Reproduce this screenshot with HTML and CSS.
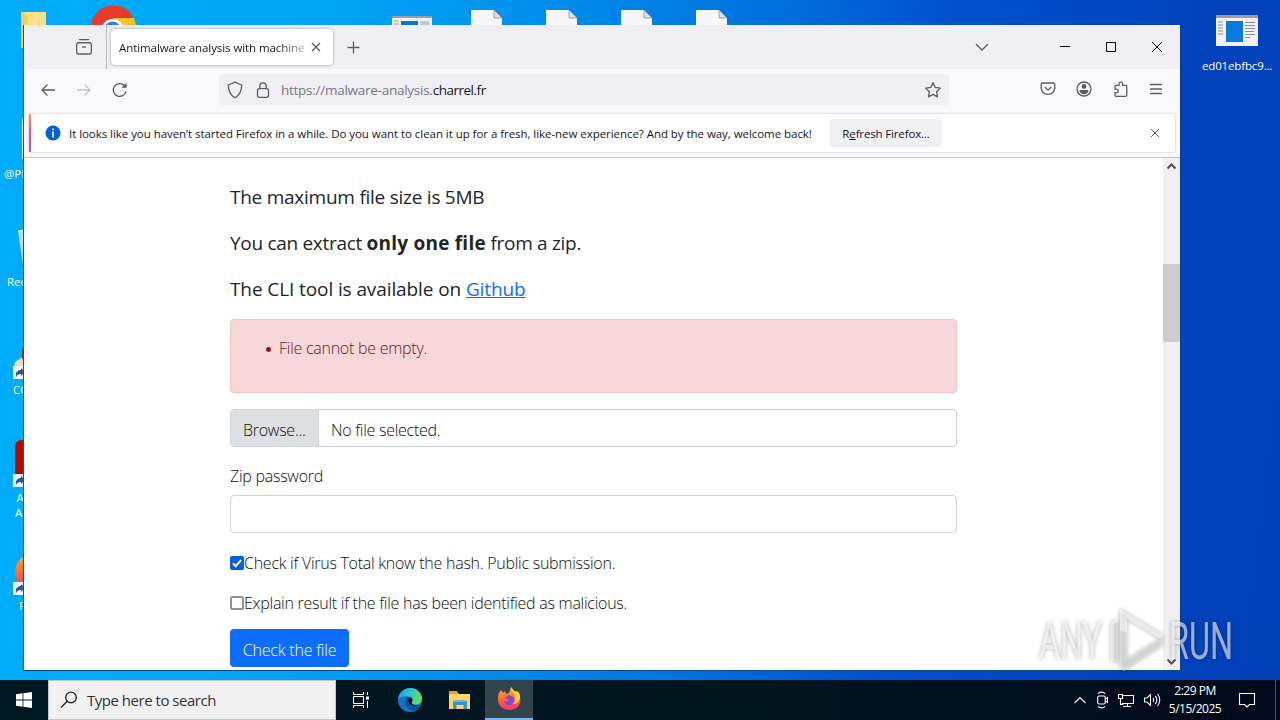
FILE: index.html
```html
<!DOCTYPE html>
<html lang="en">
  <head>
    <meta charset="UTF-8" />
    <meta name="viewport" content="width=device-width, initial-scale=1.0" />
    <title>Antimalware analysis with machine learning</title>
    <link rel="stylesheet" href="styles.css">
  </head>

  <body>
    <div class="desktop">
      <!-- Desktop icons -->
      <svg class="desktop-art" width="1280" height="680" viewBox="0 0 1280 680">
        <defs>
          <linearGradient id="fox" x1="0" y1="0" x2="0" y2="1">
            <stop offset="0" stop-color="#ffb52b" />
            <stop offset="0.5" stop-color="#ff6b35" />
            <stop offset="1" stop-color="#f0307a" />
          </linearGradient>
          <g id="page">
            <path d="M0 0h23l8 8v20H0z" fill="#f7f7fa" />
            <path d="M23 0v8h8z" fill="#dcdfe6" stroke="#8a929f" stroke-width="0.8" />
          </g>
          <g id="shortcut">
            <path d="M0 0h12v13H0z" fill="#f4f6fa" />
            <path d="M3 11c-1-5 2-7 5-7V2l4 4-4 4V8c-3 0-4 1-5 3z" fill="#2d5594" />
          </g>
        </defs>
        <path d="M21 12h25v14H21z" fill="#ffe08a" />
        <path d="M21 12h3l4 5v9l-4 22h-3z" fill="#f7cd5f" />
        <path d="M91 27a22 22 0 0 1 44 0z" fill="#e83b2a" />
        <path d="M113 18h21l2 8h-23z" fill="#fdc32c" />
        <circle cx="112.500" cy="30" r="11" fill="#fff" />
        <circle cx="112.500" cy="30" r="8.500" fill="#3c7de8" />
        <path d="M392 16h40v12h-40z" fill="#f1f1f1" />
        <path d="M392 16h40v2h-40z" fill="#999fa8" />
        <path d="M401 21h17v6h-17z" fill="#0a76d0" />
        <path d="M394 21h5M394 24h5M420 22h9M420 24h10" stroke="#9aa0a8" />
        <use href="#page" x="471" y="10" />
        <use href="#page" x="546" y="10" />
        <use href="#page" x="621" y="10" />
        <use href="#page" x="696" y="10" />
        <path d="M1216 15h42v31h-42z" fill="#f1f1f1" />
        <path d="M1216 15h42v3h-42z" fill="#9b9ca3" />
        <path d="M1244 16h3M1250 16h2M1254 16h2" stroke="#d58b60" />
        <path d="M1226 21h17v21h-17z" fill="#0a7ad8" />
        <path d="M1218 22h5M1218 25h5M1218 28h5M1218 31h5M1218 34h5M1245 22.500h10M1245 25.500h10M1245 28.500h10M1245 31.500h9M1245 34.500h10M1245 37.500h5" stroke="#8d8f97" />
        <path d="M22 119h4v40h-4z" fill="#e7f2fb" />
        <path d="M18 231l8-2v36h-3z" fill="#b9dcf1" />
        <path d="M18 231l6-1" stroke="#ecf7fd" />
        <path d="M15 362l9-6v12H14z" fill="#f3d9b8" />
        <path d="M22 350l3-4v12l-3 1z" fill="#b3202a" />
        <use href="#shortcut" x="13" y="366" />
        <rect x="15" y="440" width="30" height="38" rx="6" fill="#b30b00" />
        <use href="#shortcut" x="13" y="474" />
        <circle cx="34" cy="572" r="19" fill="url(#fox)" />
        <use href="#shortcut" x="13" y="582" />
      </svg>
      <span class="icon-label label-phones">@PH</span>
      <span class="icon-label label-recycle">Recy</span>
      <span class="icon-label label-cc">CC</span>
      <span class="icon-label label-adobe">Ad<br>Acr</span>
      <span class="icon-label label-firefox">Fir</span>
      <span class="icon-label label-file">ed01ebfbc9...</span>

      <!-- Browser window -->
      <div class="window">
        <div class="tab-bar">
          <div class="tab-view">
            <svg width="18" height="18" viewBox="0 0 18 18"><path d="M4 1.700h10M2.300 4.700h13.400" /><rect x="1.700" y="4.700" width="14.600" height="11.300" rx="2" /><path d="M7 9h4" /></svg>
          </div>
          <div class="tab">
            <span class="tab-title">Antimalware analysis with machine</span>
            <svg width="10" height="10" viewBox="0 0 10 10"><path d="M1 1l8 8M9 1l-8 8" /></svg>
          </div>
          <svg class="new-tab" width="13" height="13" viewBox="0 0 13 13"><path d="M6.500 .5v12M.5 6.500h12" /></svg>
          <div class="window-controls">
            <svg class="all-tabs" width="14" height="8" viewBox="0 0 14 8"><path d="M1 1l6 6 6-6" /></svg>
            <svg class="control" width="12" height="12" viewBox="0 0 12 12"><path d="M1 5.500h10" /></svg>
            <svg class="control" width="12" height="12" viewBox="0 0 12 12"><path d="M1.500 1.500h9v9h-9z" /></svg>
            <svg class="control" width="12" height="12" viewBox="0 0 12 12"><path d="M1 1l10 10M11 1L1 11" /></svg>
          </div>
        </div>

        <div class="nav-bar">
          <div class="nav-buttons">
            <svg width="16" height="16" viewBox="0 0 16 16"><path d="M15 8H2M7.500 2.500L2 8l5.500 5.500" /></svg>
            <svg class="disabled" width="16" height="16" viewBox="0 0 16 16"><path d="M1 8h13M8.500 2.500L14 8l-5.500 5.500" /></svg>
            <svg width="16" height="16" viewBox="0 0 16 16"><path d="M14 9.300A6.400 6.400 0 1 1 12.500 3.700L14 5.300" /><path d="M14.500 .8v5h-5z" class="solid" /></svg>
          </div>
          <div class="url-bar">
            <svg width="16" height="18" viewBox="0 0 16 18"><path d="M8 1.200L14.700 4c0 6-1.700 10-6.700 12.800C3 14 1.300 10 1.300 4z" stroke-linejoin="round" /></svg>
            <svg width="14" height="18" viewBox="0 0 14 18"><rect x="1.500" y="7.700" width="11" height="8.600" rx="2" /><path d="M3.800 7.700V5a3.200 3.200 0 0 1 6.400 0v2.700" /></svg>
            <span class="url">https://malware-analysis.<b>charrel.fr</b></span>
            <svg class="star" width="18" height="18" viewBox="0 0 18 18"><path d="M9 1.700l2.200 4.700 5.100.7-3.700 3.600.9 5.200L9 13.400l-4.500 2.500.9-5.200L1.700 7.100l5.100-.7z" stroke-linejoin="round" /></svg>
          </div>
          <div class="nav-tools">
            <svg width="16" height="16" viewBox="0 0 16 16"><path d="M2.700 2h10.600a1.500 1.500 0 0 1 1.500 1.500V7a6.800 6.300 0 0 1-13.600 0V3.500A1.500 1.500 0 0 1 2.700 2z" /><path d="M4.700 6L8 9.200 11.300 6" /></svg>
            <svg width="16" height="16" viewBox="0 0 16 16"><circle cx="8" cy="8" r="7" /><circle cx="8" cy="5.500" r="2.400" class="solid" /><path d="M3.500 9h9c0 2.600-2 4.200-4.500 4.200S3.500 11.600 3.500 9z" class="solid" /></svg>
            <svg width="16" height="16" viewBox="0 0 16 16"><path d="M2 8.200V5.300a1 1 0 0 1 1-1h3V3a1.800 1.800 0 0 1 3.600 0v1.300h3.200a1 1 0 0 1 1 1v9a1 1 0 0 1-1 1H3a1 1 0 0 1-1-1v-2.600h1.500a1.700 1.700 0 0 0 0-3.500z" /></svg>
            <svg width="14" height="14" viewBox="0 0 14 14"><path d="M1 2.500h12M1 7h12M1 11.500h12" /></svg>
          </div>
        </div>

        <div class="notice">
          <div class="notice-card">
            <svg width="16" height="16" viewBox="0 0 16 16"><circle cx="8" cy="8" r="7.500" fill="#0060df" /><path d="M8 3.500v1.800M8 6.500v6" stroke="#fff" stroke-width="1.600" /></svg>
            <span class="notice-text">It looks like you haven’t started Firefox in a while. Do you want to clean it up for a fresh, like-new experience? And by the way, welcome back!</span>
            <button class="refresh-button">R<u>e</u>fresh Firefox...</button>
            <svg class="dismiss" width="10" height="10" viewBox="0 0 10 10"><path d="M1 1l8 8M9 1l-8 8" /></svg>
          </div>
        </div>

        <div class="viewport">
          <main class="container">
            <p class="lead size-line">The maximum file size is 5MB</p>
            <p class="lead zip-line">You can extract <strong>only one file</strong> from a zip.</p>
            <p class="lead cli-line">The CLI tool is available on <a href="#">Github</a></p>
            <div class="alert">
              <ul>
                <li>File cannot be empty.</li>
              </ul>
            </div>
            <div class="file-input">
              <span class="browse">Browse...</span>
              <span class="file-name">No file selected.</span>
            </div>
            <label class="form-label" for="password">Zip password</label>
            <input class="form-control" type="password" id="password" />
            <p class="check-row">
              <svg width="14" height="14" viewBox="0 0 14 14"><rect width="14" height="14" rx="2" fill="#0060df" /><path d="M3 7.300l2.800 2.900L11 4" stroke="#fff" stroke-width="2" /></svg>
              <span>Check if Virus Total know the hash. Public submission.</span>
            </p>
            <p class="check-row">
              <svg width="14" height="14" viewBox="0 0 14 14"><rect x="1" y="1" width="12" height="12" rx="1.500" fill="#fff" stroke="#8f8f9d" stroke-width="2" /></svg>
              <span>Explain result if the file has been identified as malicious.</span>
            </p>
            <button class="submit">Check the file</button>
          </main>
          <div class="scrollbar">
            <svg width="17" height="17" viewBox="0 0 17 17"><path d="M4.500 10.500l4-4 4 4" /></svg>
            <div class="thumb"></div>
            <svg width="17" height="17" viewBox="0 0 17 17"><path d="M4.500 6.500l4 4 4-4" /></svg>
          </div>
        </div>
      </div>
    </div>

    <div class="taskbar">
      <div class="start">
        <svg width="16" height="16" viewBox="0 0 16 16"><path d="M0 2.200L6.600 1.300v6.300H0zM7.400 1.200L16 0v7.600H7.400zM0 8.400h6.600v6.300L0 13.800zM7.400 8.400H16V16l-8.600-1.200z" fill="#fff" /></svg>
      </div>
      <div class="search">
        <svg width="18" height="18" viewBox="0 0 18 18"><circle cx="11" cy="6.500" r="5.300" /><path d="M7.200 10.300L1 16.500" /></svg>
        <span>Type here to search</span>
      </div>
      <div class="task">
        <svg width="18" height="18" viewBox="0 0 18 18"><path d="M1.500 1v2.500h10V1M1.500 17v-2.500h10V17M1.500 5.500h10v7h-10zM15.500 1v3M15.500 10v7" stroke="#fff" fill="none" /><path d="M14 5.500h3v3h-3z" fill="#fff" /></svg>
      </div>
      <div class="task">
        <svg width="24" height="24" viewBox="0 0 24 24">
          <defs>
            <linearGradient id="edgeTop" x1="0" y1="0" x2="1" y2="0.300">
              <stop offset="0" stop-color="#1a93dc" />
              <stop offset="0.500" stop-color="#2dc3d8" />
              <stop offset="1" stop-color="#62dc62" />
            </linearGradient>
          </defs>
          <circle cx="12" cy="12" r="12" fill="#1473c9" />
          <path d="M.2 11C1 4.500 6 0 12 0c7 0 12 5 12 10.500 0 4-3 6-6.300 6-3 0-4.700-1.300-4-2.500 2.300-3-.7-5.800-4.700-5.800C4.500 8.200 1 10 .2 11z" fill="url(#edgeTop)" />
          <path d="M8.500 9.500C5 14 8 21 15 22.800c3-.7 5.500-2.300 7-4.800-5 2.300-12 1-12-5 0-1.500.7-2.500 1.500-3.200-1-.5-2-.6-3-.3z" fill="#11508f" />
          <path d="M13.700 14c1.700-2.200.5-4.200-1.500-4.900-2.500 1-2.700 4-1 6.400 1.700 2.500 6 4 11 2-3.500.5-9.500-.5-8.500-3.500z" fill="#001722" />
        </svg>
      </div>
      <div class="task">
        <svg width="22" height="20" viewBox="0 0 22 20"><path d="M0 2h8l2 2h11v15H0z" fill="#ffd75e" /><path d="M0 1h8l1 3H0z" fill="#e8a11d" /><path d="M4 11h14v8h-3.500v-4h-7v4H4z" fill="#3f91cc" /><path d="M5 10h12v2H5z" fill="#65b1df" /></svg>
      </div>
      <div class="task active">
        <svg width="24" height="24" viewBox="0 0 24 24">
          <path d="M2 6l2-3 2 3 2-2 1 3 3-1 2-6 3 4 3 1c3 3 4 7 3 11-2 5-6 7-10 7C6 23 1 19 1 13c0-3 0-5 1-7z" fill="url(#fox)" />
          <path d="M14 0c0 4 3 5 4 9s0 7-3 8c5 0 8-3 8-7 0-3-1-5-3-6l-1 1c-2-1-4-3-5-5z" fill="#ffd43b" />
          <path d="M8 11l4-3 4 2c2 3 1 7-3 8-3 0-6-2-6-4l3 1 3-2z" fill="#7748e0" />
        </svg>
      </div>
      <div class="tray">
        <svg width="14" height="18" viewBox="0 0 14 18"><path d="M1.500 12L7 6.500l5.500 5.500" /></svg>
        <svg width="14" height="18" viewBox="0 0 14 18"><rect x="2.700" y="5" width="7.500" height="8" rx="1.500" /><path d="M10.200 8l2.300-1.500v5l-2.300-1.500M3 2.500c2-1.500 5-1.500 7 0M3 15.500c2 1.500 5 1.500 7 0" /></svg>
        <svg width="18" height="18" viewBox="0 0 18 18"><path d="M5 4.500h11.500v8H5M10.500 12.500v3M6 15.500h8M1.500 3.500h4v4h-4zM3.500 7.500v6h3" /></svg>
        <svg width="18" height="18" viewBox="0 0 18 18"><path d="M1.500 7h2.500l3.500-3.500v11L4 11H1.500zM10 7c1 1 1 3 0 4M12.300 5c2 2 2 6 0 8M14.500 3c3 3.500 3 8.500 0 12" /></svg>
        <div class="clock">
          <span>2:29 PM</span>
          <span>5/15/2025</span>
        </div>
        <svg class="action-center" width="18" height="18" viewBox="0 0 18 18"><path d="M1.500 2.500h15v11h-5L9 16l-2.500-2.500h-5z" /></svg>
        <div class="show-desktop"></div>
      </div>
    </div>

    <!-- Watermark over everything -->
    <svg class="watermark" width="210" height="76" viewBox="0 0 210 76">
      <text x="4" y="54" textLength="63" lengthAdjust="spacingAndGlyphs">ANY</text>
      <path d="M76 17l6-3v4l-3 1v37h-3z" />
      <path d="M79 19v37l4 3V18z" class="faint" />
      <path d="M85 4l43 26-3 4-33-20v14l-7-2z" />
      <path d="M85 26v37l4 3 39-26v-10l-3 4-33 20V28z" class="faint" />
      <text x="134" y="54" textLength="64" lengthAdjust="spacingAndGlyphs">RUN</text>
    </svg>
  </body>
</html>
```
FILE: styles.css
```css
* {
  box-sizing: border-box;
}

body {
  margin: 0;
  width: 1280px;
  height: 720px;
  overflow: hidden;
  font-family: "Open Sans", "Noto Sans", sans-serif;
  font-size: 16px;
  color: #212529;
}

svg {
  display: block;
  flex-shrink: 0;
}

.desktop {
  position: relative;
  height: 680px;
  background: linear-gradient(97deg, #00adfc 0%, #00a5f7 24%, #008eec 40%, #0070dc 57%, #0050cb 70%, #0243bd 88%, #0240b8 100%);
}

.desktop-art {
  position: absolute;
  left: 0;
  top: 0;
}

.icon-label {
  position: absolute;
  color: #fff;
  font-size: 11.5px;
  line-height: 15px;
  white-space: nowrap;
}

.label-phones {
  left: 4px;
  top: 166px;
}

.label-recycle {
  left: 7px;
  top: 274px;
}

.label-cc {
  left: 13px;
  top: 382px;
}

.label-adobe {
  left: 15px;
  top: 490px;
  text-align: center;
}

.label-firefox {
  left: 19px;
  top: 598px;
}

.label-file {
  left: 1202px;
  top: 58px;
  letter-spacing: -0.15px;
}

/* Browser window */
.window {
  position: absolute;
  left: 23px;
  top: 25px;
  width: 1158px;
  height: 646px;
  display: flex;
  flex-direction: column;
  background: #fff;
  border-left: 1px solid #17577f;
  border-right: 1px solid #0b3c9c;
  border-bottom: 1px solid #0b4a83;
}

.window svg {
  fill: none;
  stroke: #5b5b66;
  stroke-width: 1.3;
}

.window .solid {
  fill: #5b5b66;
  stroke: none;
}

.tab-bar {
  display: flex;
  align-items: center;
  height: 44px;
  background: #f0f0f4;
}

.tab-view {
  display: flex;
  align-items: center;
  justify-content: flex-end;
  width: 83px;
  height: 44px;
  padding-right: 13px;
  border-right: 1px solid #b9b9c2;
}

.tab {
  display: flex;
  align-items: center;
  width: 222px;
  height: 36px;
  margin-left: 4px;
  padding: 0 11px 0 8px;
  background: #fff;
  border-radius: 4px;
  box-shadow: 0 0 3px rgba(0, 0, 0, 0.4);
}

.tab-title {
  width: 187px;
  margin-right: 5px;
  white-space: nowrap;
  font-size: 11.5px;
  letter-spacing: -0.08px;
  color: #15141a;
  -webkit-mask-image: linear-gradient(to right, #000 158px, rgba(0, 0, 0, 0.3));
}

.new-tab {
  margin-left: 14px;
}

.window-controls {
  display: flex;
  align-items: center;
  margin-left: auto;
  padding-right: 17px;
}

.all-tabs {
  margin-right: 36px;
}

.window svg.control {
  margin-left: 34px;
  stroke: #000;
  stroke-width: 1;
}

.nav-bar {
  display: flex;
  height: 44px;
  padding-top: 5px;
  background: #f9f9fb;
}

.nav-buttons {
  display: flex;
  align-items: center;
  gap: 20px;
  height: 32px;
  width: 195px;
  padding-left: 16px;
}

.window svg.disabled {
  stroke: #c0c0c6;
}

.url-bar {
  display: flex;
  align-items: center;
  width: 730px;
  height: 31px;
  padding: 0 7px 0 8px;
  background: #f0f0f4;
  border-radius: 4px;
}

.url-bar svg + svg {
  margin-left: 13px;
}

.url {
  margin-left: 11px;
  font-size: 13.5px;
  letter-spacing: -0.26px;
  color: #777780;
}

.url b {
  font-weight: normal;
  letter-spacing: -0.48px;
  color: #15141a;
}

.star {
  margin-left: auto;
}

.nav-tools {
  display: flex;
  align-items: center;
  gap: 20.5px;
  height: 30px;
  margin-left: auto;
  padding-right: 17px;
}

.notice {
  height: 45px;
  padding: 1px 5px 0 5px;
  background: #f9f9fb;
  border-bottom: 1px solid #c4c4ca;
}

.notice-card {
  display: flex;
  align-items: center;
  height: 38px;
  padding-right: 15px;
  background: #fff;
  border-left: 2px solid;
  border-image: linear-gradient(#ff9a50, #e2558e, #9059ff) 1;
  box-shadow: 0 0 2px rgba(0, 0, 0, 0.25);
}

.notice-card svg:first-child {
  margin-left: 14px;
  stroke: none;
}

.notice-text {
  width: 743px;
  margin-left: 8px;
  font-size: 11.5px;
  letter-spacing: -0.05px;
  color: #15141a;
  white-space: nowrap;
}

.refresh-button {
  width: 112px;
  height: 28px;
  margin-left: 18px;
  padding: 0;
  border: none;
  border-radius: 4px;
  background: #f0f0f4;
  font: 11.5px "Open Sans", sans-serif;
  letter-spacing: -0.15px;
  color: #15141a;
}

.window svg.dismiss {
  margin-left: auto;
  stroke-width: 1;
}

/* Page content */
.viewport {
  display: flex;
  flex: 1;
  min-height: 0;
}

.container {
  width: 727px;
  margin-left: 206px;
  padding-top: 23px;
  line-height: 24px;
  font-weight: 300;
  letter-spacing: -0.26px;
  color: #0c0e10;
}

.container p {
  margin: 0 0 16px;
  white-space: nowrap;
}

.container .lead {
  height: 30px;
  font-size: 19px;
  font-weight: 400;
  line-height: 32px;
  letter-spacing: -0.25px;
  color: #212529;
}

.container .zip-line {
  letter-spacing: -0.3px;
}

.lead strong {
  letter-spacing: 0.22px;
}

.container .cli-line {
  letter-spacing: -0.1px;
}

.lead a {
  color: #0d6efd;
}

.alert {
  height: 74px;
  margin-bottom: 16px;
  padding: 16px;
  background: #f8d7da;
  border: 1px solid #f0c3c9;
  border-radius: 4px;
  color: #6f1420;
}

.alert ul {
  margin: 0;
  padding-left: 19px;
  list-style: none;
}

.alert li {
  display: flex;
  align-items: center;
}

.alert li::before {
  content: "";
  width: 5px;
  height: 5px;
  margin: 2px 8px 0 0;
  border-radius: 50%;
  background: #842029;
}

.file-input {
  display: flex;
  height: 38px;
  margin-bottom: 16px;
  border: 1px solid #ced4da;
  border-radius: 4px;
  line-height: 40px;
  overflow: hidden;
}

.browse {
  width: 88px;
  padding-left: 12px;
  background: #dde0e3;
  border-right: 1px solid #ced4da;
}

.file-name {
  padding-left: 12px;
}

.form-label {
  display: block;
  height: 24px;
  margin-bottom: 8px;
  line-height: 26px;
}

.form-control {
  display: block;
  width: 100%;
  height: 38px;
  margin-bottom: 16px;
  border: 1px solid #ced4da;
  border-radius: 4px;
}

.check-row {
  display: flex;
  align-items: center;
  padding-top: 4px;
  height: 24px;
}

.check-row svg {
  stroke: none;
}

.submit {
  width: 119px;
  height: 38px;
  padding: 3px 0 0;
  border: none;
  border-radius: 4px;
  background: #0d6efd;
  color: #fff;
  font: 300 16px "Open Sans", sans-serif;
  letter-spacing: -0.2px;
}

.scrollbar {
  display: flex;
  flex-direction: column;
  width: 17px;
  margin-left: auto;
  background: #f0f0f0;
}

.window .scrollbar svg {
  stroke: #505050;
  stroke-width: 2;
}

.thumb {
  height: 78px;
  margin: 89px 0 auto;
  background: #cdcdcd;
}

/* Taskbar */
.taskbar {
  display: flex;
  height: 40px;
  background: linear-gradient(90deg, #001822, #00141e 60%, #000a1c);
}

.start,
.task {
  display: flex;
  align-items: center;
  justify-content: center;
  width: 48px;
}

.search {
  display: flex;
  align-items: center;
  width: 288px;
  padding-left: 11px;
  background: #f1f1f1;
  border: 1px solid #c5c5c5;
  color: #333;
  font-size: 15px;
  letter-spacing: -0.48px;
}

.search svg {
  margin-right: 9px;
  fill: none;
  stroke: #222;
  stroke-width: 1.3;
}

.task {
  width: 49.67px;
}

.task.active {
  width: 48px;
  background: #34444d;
  border-bottom: 2px solid #76b9ed;
}

.tray {
  display: flex;
  align-items: center;
  margin-left: auto;
  color: #fff;
}

.tray svg {
  margin-right: 8px;
  fill: none;
  stroke: #fff;
  stroke-width: 1.1;
}

.clock {
  display: flex;
  flex-direction: column;
  align-items: center;
  width: 52px;
  font-size: 12px;
  line-height: 18px;
  letter-spacing: -0.5px;
  white-space: nowrap;
}

.tray svg.action-center {
  margin: 0 0 0 17px;
}

.show-desktop {
  width: 5px;
  height: 40px;
  margin-left: 19px;
  border-left: 1px solid #4a5364;
}

.watermark {
  position: absolute;
  left: 1035px;
  top: 605px;
  fill: rgba(255, 255, 255, 0.6);
  font: 51px Roboto, sans-serif;
  filter: drop-shadow(0 0 2px rgba(0, 0, 0, 0.5));
}

.watermark .faint {
  fill: rgba(225, 225, 228, 0.55);
}
```
